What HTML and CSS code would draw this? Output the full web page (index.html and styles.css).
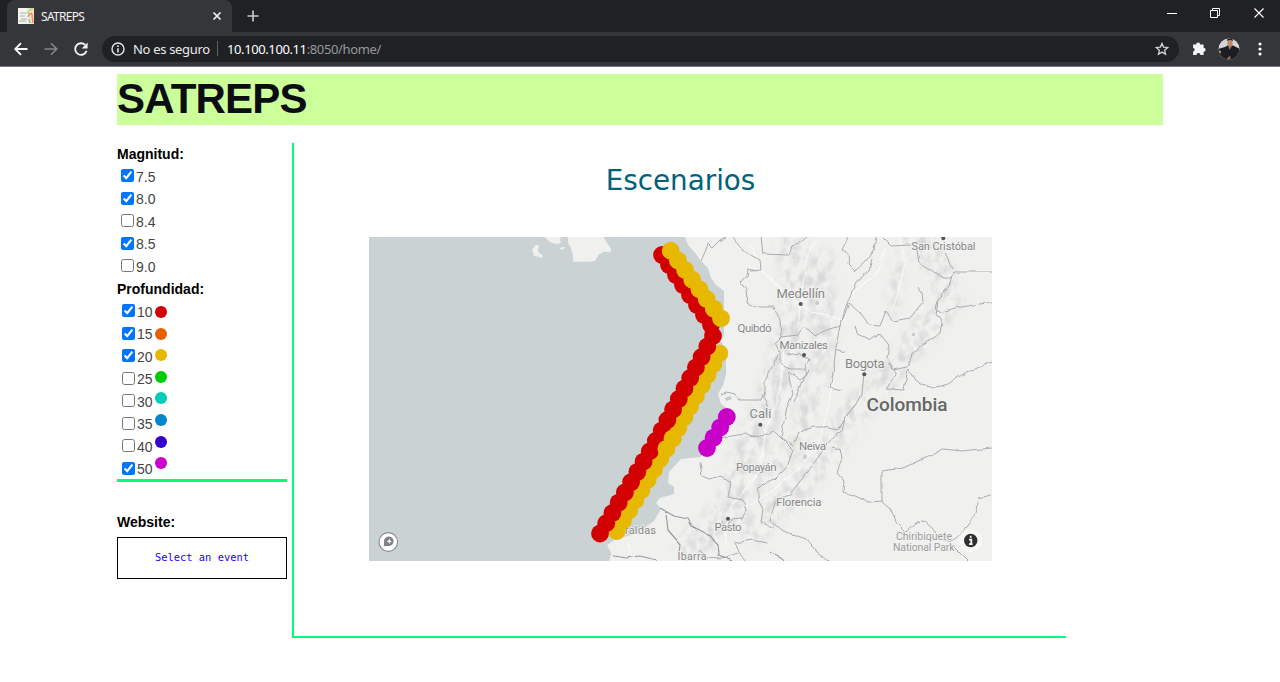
FILE: index.html
```html
<!DOCTYPE html>
<html lang="es">
<head>
<meta charset="utf-8">
<title>SATREPS</title>
<link rel="stylesheet" href="styles.css">
</head>
<body>
<header class="browser">
  <div class="tabstrip">
    <div class="tab">
      <svg class="favicon" width="16" height="16" viewBox="0 0 16 16"><rect width="16" height="16" fill="#f4f4ee"/><path d="M9 0H16V16H12Z" fill="#f3e2c4"/><path d="M2 5H8M2 8H7M3 11H9M1 13H8" stroke="#c3c5c4" stroke-width="1.4"/><path d="M9 6Q11 1 15 1" stroke="#b9d98c" stroke-width="2" fill="none"/><path d="M10 9Q12 4 14 6L15 15" stroke="#ee8b80" stroke-width="1.6" fill="none"/><path d="M11 11L12 15" stroke="#8fc987" stroke-width="1.5"/></svg>
      <span class="tab-title">SATREPS</span>
      <svg class="tab-close" width="10" height="10" viewBox="0 0 10 10"><path d="M1.5 1.5L8.5 8.5M8.5 1.5L1.5 8.5" stroke="#f1f1f1" stroke-width="1.7"/></svg>
    </div>
    <svg class="new-tab" width="12" height="12" viewBox="0 0 12 12"><path d="M6 .5V11.5M.5 6H11.5" stroke="#c6c8ca" stroke-width="1.7"/></svg>
    <div class="window-buttons">
      <svg width="10" height="12" viewBox="0 0 10 12"><path d="M0 6.5H10" stroke="#fff"/></svg>
      <svg width="11" height="12" viewBox="0 0 11 12"><path d="M.5 3.5H7.5V10.5H.5ZM2.5 3.5V1.5H9.5V8.5H7.5" fill="none" stroke="#fff"/></svg>
      <svg width="11" height="12" viewBox="0 0 11 12"><path d="M.5 1.500L9.500 10.500M9.500 1.500L.5 10.500" stroke="#fff" stroke-width="1.200"/></svg>
    </div>
  </div>
  <div class="toolbar">
    <div class="nav">
      <svg width="14" height="14" viewBox="0 0 14 14"><path d="M13.5 7H1.5M7 1.2L1.2 7L7 12.8" fill="none" stroke="#fff" stroke-width="1.8"/></svg>
      <svg width="14" height="14" viewBox="0 0 14 14"><path d="M.5 7H12.5M7 1.2L12.8 7L7 12.8" fill="none" stroke="#85878a" stroke-width="1.6"/></svg>
      <svg width="14" height="14" viewBox="0 0 14 14"><path d="M12.6 8.7A5.8 5.8 0 1 1 11.2 3" fill="none" stroke="#f1f3f4" stroke-width="1.8"/><path d="M13.6 .4V6.4H7.6Z" fill="#f1f3f4"/></svg>
    </div>
    <div class="omnibox">
      <svg width="14" height="14" viewBox="0 0 14 14"><circle cx="7" cy="7" r="6" fill="none" stroke="#e4e6e8" stroke-width="1.4"/><path d="M7 6.2V10.4M7 3.3V5" stroke="#e4e6e8" stroke-width="1.6"/></svg>
      <span class="insecure">No es seguro</span>
      <span class="divider"></span>
      <span class="url"><b>10.100.100.11</b>:8050/home/</span>
      <svg class="star" width="14" height="14" viewBox="0 0 14 14"><path d="M7 1.4L8.6 5.1L12.7 5.5L9.6 8.2L10.5 12.2L7 10.1L3.5 12.2L4.4 8.2L1.3 5.5L5.4 5.1Z" fill="none" stroke="#d5d7d9" stroke-width="1.25"/></svg>
    </div>
    <svg class="puzzle" width="15" height="15" viewBox="0 0 14 14"><path d="M1 3.2H3.8A1.9 1.9 0 1 1 7.6 3.2H10.8V6.2A1.9 1.9 0 1 1 10.8 10V13H7.9A1.9 1.9 0 0 0 4.1 13H1V9.9A1.9 1.9 0 0 0 1 6.2Z" fill="#f4f5f6"/></svg>
    <svg class="avatar" width="22" height="22" viewBox="0 0 22 22"><defs><clipPath id="face"><circle cx="11" cy="11" r="10.5"/></clipPath></defs><g clip-path="url(#face)"><rect width="22" height="22" fill="#d4d4d6"/><path d="M0 11L7 9L9.5 7.5H15L22 11V22H0Z" fill="#1b1d23"/><path d="M10 7L11.5 12L14.5 7Z" fill="#a7765c"/><ellipse cx="12" cy="4.8" rx="2.6" ry="3.8" fill="#bd896b"/><path d="M9 3Q9 0 12 0T15 3Q12 1 9 3Z" fill="#231b1b"/><path d="M0 12L3 13V15H0Z" fill="#b98265"/><path d="M9 20L12 18L13 20L10 22Z" fill="#9e6b54"/></g></svg>
    <svg class="dots" width="4" height="14" viewBox="0 0 4 14"><g fill="#fff"><circle cx="2" cy="2" r="1.6"/><circle cx="2" cy="7" r="1.6"/><circle cx="2" cy="12" r="1.6"/></g></svg>
  </div>
</header>
<main class="page">
  <h1 class="banner">SATREPS</h1>
  <div class="columns">
    <aside class="sidebar">
      <div class="filters">
        <p class="label">Magnitud:</p>
        <label class="option"><input type="checkbox" checked>7.5</label>
        <label class="option"><input type="checkbox" checked>8.0</label>
        <label class="option"><input type="checkbox">8.4</label>
        <label class="option"><input type="checkbox" checked>8.5</label>
        <label class="option"><input type="checkbox">9.0</label>
        <p class="label">Profundidad:</p>
        <div class="depth">
          <div class="depth-options">
            <label class="option"><input type="checkbox" checked>10</label>
            <label class="option"><input type="checkbox" checked>15</label>
            <label class="option"><input type="checkbox" checked>20</label>
            <label class="option"><input type="checkbox">25</label>
            <label class="option"><input type="checkbox">30</label>
            <label class="option"><input type="checkbox">35</label>
            <label class="option"><input type="checkbox">40</label>
            <label class="option"><input type="checkbox" checked>50</label>
          </div>
          <div class="legend"><i class="d10"></i><i class="d15"></i><i class="d20"></i><i class="d25"></i><i class="d30"></i><i class="d35"></i><i class="d40"></i><i class="d50"></i></div>
        </div>
      </div>
      <p class="label website">Website:</p>
      <div class="event">Select an event</div>
    </aside>
    <section class="panel">
      <h2 class="title">Escenarios</h2>
      <svg class="map" width="622.5" height="324" viewBox="369 237 622.5 324">
        <defs>
          <filter id="rough" x="-5%" y="-5%" width="110%" height="110%" color-interpolation-filters="sRGB"><feTurbulence type="fractalNoise" baseFrequency=".13" numOctaves="1" seed="4"/><feDisplacementMap in="SourceGraphic" scale="4" xChannelSelector="R" yChannelSelector="G"/><feGaussianBlur stdDeviation=".35"/></filter>
          <filter id="relief" x="0" y="0" width="100%" height="100%" color-interpolation-filters="sRGB"><feTurbulence type="fractalNoise" baseFrequency=".11 .08" numOctaves="3" seed="9"/><feColorMatrix values="0 0 0 0 .83  0 0 0 0 .83  0 0 0 0 .83  3 0 0 0 -1.2"/><feGaussianBlur stdDeviation=".6"/></filter>
          <filter id="soft" filterUnits="userSpaceOnUse" x="640" y="237" width="352" height="324"><feGaussianBlur stdDeviation="5"/></filter>
          <mask id="ranges" maskUnits="userSpaceOnUse" x="369" y="237" width="623" height="324"><g filter="url(#soft)" fill="none" stroke="#fff" stroke-opacity=".8" stroke-linecap="round" stroke-linejoin="round"><path d="M792 245L800 290L790 340L772 400L745 460L730 510L690 550" stroke-width="32"/><path d="M822 260L825 340L815 390L790 450L760 480" stroke-width="22"/><path d="M915 235L940 270L950 300L920 335L880 385L850 415L830 450L795 490L755 530" stroke-width="26"/><path d="M900 260L893 310" stroke-width="12"/></g></mask>
        </defs>
        <rect x="369" y="237" width="623" height="324" fill="#cad2d3"/>
        <g fill="#f0f0ef">
          <g transform="translate(520 230) scale(.33333)"><path d="M72 20H124L120 29L123 39L110 42L91 37L83 30Z"/><path d="M36 60L46 46L54 44L57 51L53 61L58 70L68 76V84L55 80L42 78L40 69Z"/><path d="M118 56L128 51L137 52L126 59Z"/><path d="M143 20H250L260 37L273 56L272 67L253 65L236 74L225 92L212 95H160L158 72L152 53L145 39Z"/></g>
          <path d="M685 237L688 245L696 254L700 260L708 268L711 278L716 285L724 291V335L721 341L726 351V375L723 385L718 394L721 404L728 409L736 416L726 422L715 443L700 457L681 459L669 472L668 483L674 487V494L660 498L656 503L661 509L654 521L644 528L631 535L616 539L607 545L611 553L609 561H992V237Z"/>
        </g>
        <rect x="640" y="237" width="352" height="324" filter="url(#relief)" mask="url(#ranges)"/>
        <g fill="none" stroke="#fff" stroke-width="1.1" opacity=".7" filter="url(#rough)"><path d="M750 245L763 272L785 293L812 312L846 320M798 325L801 300L806 260L815 240M900 237L905 265L893 310M850 295L878 272L885 250M833 380L828 408L820 440L800 468L770 492L750 505M784 350L780 392L766 430L760 470L730 509M728 518L725 545M627 541L634 561"/></g>
        <g fill="none" stroke="#aaacad" stroke-width="1" stroke-linejoin="round" filter="url(#rough)">
          <path d="M701 261L705 252L708 244L712 248L720 240L726 237M732 237L740 247L747 253L760 260L761 270L750 271M757 271L748 269L747 276L741 283L746 290L748 303L755 307L774 307L780 320L781 337L798 335L803 327L811 331L816 336L826 330L840 326L849 303L862 315L869 325L880 326L886 311L893 321L910 318L923 302L922 293L918 287"/>
          <path d="M761 237L763 254L789 255L792 246L801 242L807 237M848 237L842 250L850 254L848 264L855 271L866 261L874 249L876 237M883 238L891 246L910 245M917 250L919 263L932 271L944 278H951L953 272H992M945 253L953 269M953 272L949 286L938 300L935 309L942 312L955 308L992 302M872 260L869 271L856 282L850 296L846 306L840 326L836 347L834 367L830 388L842 391M855 325L857 334L871 340L880 334L889 345L887 357L893 370L907 367L913 353L925 343L940 333L942 323L936 314L938 302M888 363L896 375L886 389L904 390L908 369L919 383L932 388L948 384L965 373L992 362"/>
          <path d="M781 337L775 343L780 352V364L791 369L805 369L809 359L798 353L788 355M805 369L807 375L800 380L790 372L789 378L793 394L787 407L781 437L793 446L799 433L812 427L823 427L838 430L848 414L856 404L862 393L864 374M856 404L846 416L842 429L826 446L810 469L790 494L775 502L770 520L781 530L806 539L817 552L829 561M809 370L801 383L794 402M836 349L845 352M778 354L771 369L764 383V397L768 404L763 418L754 415"/>
          <path d="M721 394L727 392L735 394L739 400L761 400L764 392M700 462L702 476L709 479L721 476L731 483L728 497L743 500L746 511L742 518L731 519L725 531L722 520M718 438L745 434L752 437L767 435L773 430L780 437L793 450L787 467L775 479L765 482L758 489L758 500L763 509L761 522L775 529M745 561L739 552L735 543L752 540L768 543M738 553L722 558L705 557L700 550M832 447L840 449L842 459L837 473L844 481L843 492L853 495L868 502L882 501L890 508L897 523L906 532L917 522L924 521L933 529L938 536L949 542L956 538L968 527L975 513L979 498L991 495M882 501V471L903 468L916 462L933 455L943 449L962 451L992 448M949 542L956 549L964 557L968 561"/>
          <path d="M660 508L674 516L688 519L692 526L709 535L718 544L719 555L732 561M666 514L668 530L680 544L679 554M610 555L625 558L640 556L657 560M770 552L781 557L784 561" stroke="#999b9c" stroke-width="1.2"/>
        </g>
        <g fill="#c0cccd"><circle cx="817" cy="303" r="2"/><circle cx="913.5" cy="334.5" r="1.7"/><path d="M803 456L806 454L807 458L804 459Z"/><path d="M725 398L730 396L732 399L726 401Z"/></g>
        <g class="city">
          <g fill="#555"><circle cx="800.7" cy="304" r="2"/><circle cx="804" cy="355" r="2"/><circle cx="864.3" cy="374.2" r="2"/><circle cx="943.3" cy="238.3" r="2"/><circle cx="760.3" cy="424.8" r="2"/><circle cx="728" cy="518.8" r="2"/></g>
          <text x="776.5" y="297.5" textLength="48.5" font-size="13">Medellín</text>
          <text x="737.5" y="332" textLength="34" font-size="11.5">Quibdó</text>
          <text x="779.5" y="349" textLength="48.5" font-size="11.5">Manizales</text>
          <text x="845" y="368" textLength="39.5" font-size="13">Bogota</text>
          <text x="911.5" y="250" textLength="64" font-size="11">San Cristóbal</text>
          <text x="866.5" y="411" textLength="81" font-size="19" class="country">Colombia</text>
          <text x="749.5" y="418" textLength="22" font-size="13">Cali</text>
          <text x="799" y="450" textLength="27" font-size="11.5">Neiva</text>
          <text x="736" y="471" textLength="40.5" font-size="11.5">Popayán</text>
          <text x="776" y="506" textLength="45.5" font-size="11.5">Florencia</text>
          <text x="714.5" y="531" textLength="27" font-size="11.5">Pasto</text>
          <text x="677.5" y="559.5" textLength="29" font-size="10.5">Ibarra</text>
          <text x="625" y="533.5" textLength="31" font-size="11">raldas</text>
          <text x="896" y="539.5" textLength="56" font-size="10.5" class="park">Chiribiquete</text>
          <text x="893" y="550.5" textLength="61.5" font-size="10.5" class="park">National Park</text>
        </g>
        <g id="events"></g>
        <circle cx="388.3" cy="542" r="9.3" fill="#fff" stroke="#8a8f90" stroke-width="1.2"/>
        <path d="M384 546V541.5A4.8 4.7 0 1 1 389 546Z" fill="#7e8384"/><path d="M389.3 538.6L390.1 540.5L392 541.3L390.1 542.1L389.3 544L388.5 542.1L386.6 541.3L388.5 540.5Z" fill="#fff"/>
        <circle cx="970.7" cy="540.5" r="11.5" fill="#f8f8f7"/><circle cx="970.7" cy="540.5" r="6.7" fill="#303030"/><path d="M970.7 535.7V537.7M969 539.6H971.3V543.8M969 544.2H972.6" fill="none" stroke="#fff" stroke-width="1.7"/>
      </svg>
    </section>
  </div>
</main>
<script src="map.js"></script>
</body>
</html>
```
FILE: styles.css
```css
* { box-sizing: border-box; }
body { margin: 0; height: 682px; overflow: hidden; background: #fff; font-family: "Liberation Sans", Arial, sans-serif; }
svg { display: block; flex: none; }
h1, h2, p { margin: 0; }

.browser { height: 67px; background: #35363a; border-bottom: 1px solid #77787b; font-family: "Noto Sans", "Open Sans", sans-serif; }
.tabstrip { display: flex; align-items: flex-start; height: 32px; background: #202124; padding-left: 7px; }
.tab { display: flex; align-items: center; width: 225px; height: 32px; padding: 0 10px 0 11px; background: #35363a; border-radius: 8px 8px 0 0; }
.tab-title { margin-left: 7px; flex: 1; font-size: 12px; letter-spacing: -.7px; color: #f1f3f4; }
.new-tab { margin: 10px 0 0 15px; }
.window-buttons { display: flex; gap: 33px; margin: 7px 15px 0 auto; }
.toolbar { display: flex; align-items: center; height: 33px; padding: 0 18px 0 14px; }
.nav { display: flex; gap: 16px; width: 88px; }
.omnibox { display: flex; align-items: center; width: 1077px; height: 26px; padding: 0 10px 0 9px; border-radius: 13px; background: #202124; font-size: 13px; color: #96999c; white-space: nowrap; }
.insecure { width: 77px; margin-left: 8px; color: #e8eaed; letter-spacing: -.32px; }
.divider { width: 1px; height: 15px; margin: 0 9px 0 7px; background: #5f6368; }
.url { letter-spacing: -.35px; }
.url b { font-weight: 400; color: #fff; letter-spacing: -.4px; }
.star { margin-left: auto; }
.puzzle { margin-left: 13px; }
.avatar { margin-left: 11px; }
.dots { margin-left: 18px; }

.page { padding: 7px 117px 0; }
.banner { height: 50.5px; background: #cf9; color: #0c0d12; font-size: 42px; line-height: 50px; letter-spacing: -.8px; }
.columns { display: flex; padding-top: 18.5px; }
.sidebar { width: 170px; margin-right: 5px; color: #444; font-size: 14px; }
.filters { height: 339px; border-bottom: 3px solid #00ff7f; }
.label { height: 22.5px; line-height: 23px; font-size: 14px; font-weight: 700; color: #000; }
.option { display: flex; align-items: center; height: 22.5px; padding: 0 0 0 4px; }
.option input { flex: none; width: 13px; height: 13px; margin: -2px 2px 0 0; }
.depth { display: flex; }
.depth-options .option { padding-left: 5px; }
.legend { display: flex; flex-direction: column; gap: 9.6px; padding-top: 5.6px; margin-left: 2px; }
.legend i { width: 12px; height: 12px; border-radius: 50%; }
.d10 { background: #d20000; }
.d15 { background: #e66000; }
.d20 { background: #e6b800; }
.d25 { background: #0c0; }
.d30 { background: #00ccb8; }
.d35 { background: #08c; }
.d40 { background: #30c; }
.d50 { background: #c0c; }
.website { margin-top: 29px; }
.event { height: 42px; margin-top: 3.5px; border: 1px solid #000; color: #1a00ff; font: 10.4px/39px "DejaVu Sans Mono", monospace; text-align: center; }

.panel { width: 774px; height: 495px; border-left: 2px solid #00ff7f; border-bottom: 2px solid #00ff7f; padding: 20px 0 0 75px; }
.title { width: 623px; height: 74px; text-align: center; color: #00627a; font: 400 27.8px/36px "DejaVu Sans", sans-serif; }
.city { font-family: Roboto, sans-serif; fill: #868686; }
.city text { paint-order: stroke; stroke: #f3f3f2; stroke-width: 1.5px; }
.city .country { fill: #666; font-weight: 500; }
.city .park { fill: #9b9b9b; }
```
FILE: map.js
```
const layer = document.getElementById("events");
const RED = "#d20000", YELLOW = "#e6b800", MAGENTA = "#c800c8";

function dot(x, y, color) {
  const c = document.createElementNS("http://www.w3.org/2000/svg", "circle");
  c.setAttribute("cx", x);
  c.setAttribute("cy", y);
  c.setAttribute("r", 8.9);
  c.setAttribute("fill", color);
  layer.appendChild(c);
}

// Draws evenly spaced events along a fault segment.
function segment(x1, y1, x2, y2, steps, color, from = 0, to = steps) {
  for (let i = from; i <= to; i++) {
    dot(x1 + (x2 - x1) * i / steps, y1 + (y2 - y1) * i / steps, color);
  }
}

segment(719.3, 353.3, 672.5, 438.5, 8, YELLOW);
segment(672.5, 438.5, 616.7, 531, 9, YELLOW);
segment(662, 255, 711, 325, 7, RED);
segment(713, 336, 656, 441, 10, RED);
segment(656, 441, 600, 533.5, 9, RED);
segment(672.5, 438.5, 616.7, 531, 9, YELLOW, 0, 1);
segment(670.7, 250.7, 721, 318.3, 7, YELLOW);
segment(726.8, 417, 707, 448, 3, MAGENTA);
```
